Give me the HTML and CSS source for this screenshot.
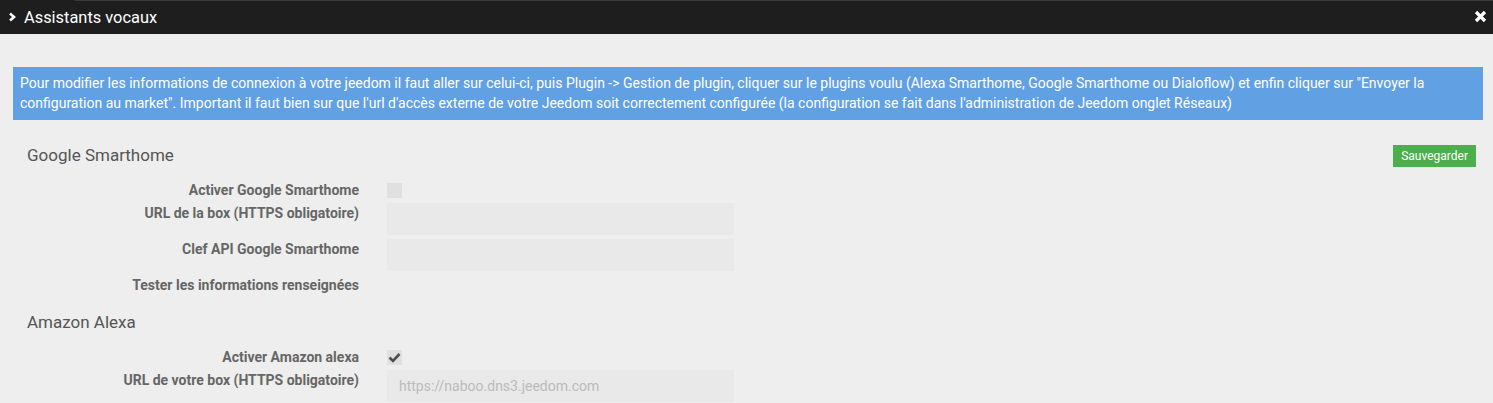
FILE: index.html
```html
<!DOCTYPE html>
<html lang="fr">
<head>
  <meta charset="UTF-8">
  <title>Assistants vocaux</title>
  <link rel="stylesheet" href="styles.css">
</head>
<body>
  <div class="titlebar">
    <svg class="chevron" width="9" height="10" viewBox="0 0 9 10"><path d="M2 1.5 L6 5 L2 8.5" fill="none" stroke="#fff" stroke-width="2.6"/></svg>
    <span class="title">Assistants vocaux</span>
    <svg class="close" width="13" height="13" viewBox="0 0 13 13"><path d="M2 2 L11 11 M11 2 L2 11" stroke="#fff" stroke-width="3.2"/></svg>
  </div>

  <div class="content">
    <div class="alert">Pour modifier les informations de connexion à votre jeedom il faut aller sur celui-ci, puis Plugin -&gt; Gestion de plugin, cliquer sur le plugins voulu (Alexa Smarthome, Google Smarthome ou Dialoflow) et enfin cliquer sur "Envoyer la configuration au market". Important il faut bien sur que l'url d'accès externe de votre Jeedom soit correctement configurée (la configuration se fait dans l'administration de Jeedom onglet Réseaux)</div>

    <div class="legend">
      <span>Google Smarthome</span>
      <button class="btn-save">Sauvegarder</button>
    </div>
    <div class="form">
      <label>Activer Google Smarthome</label>
      <div><span class="checkbox"></span></div>
      <label>URL de la box (HTTPS obligatoire)</label>
      <div><input class="field" type="text"></div>
      <label>Clef API Google Smarthome</label>
      <div><input class="field" type="text"></div>
      <label>Tester les informations renseignées</label>
      <div></div>
    </div>

    <div class="legend second">
      <span>Amazon Alexa</span>
    </div>
    <div class="form second">
      <label>Activer Amazon alexa</label>
      <div><span class="checkbox checked"><svg width="15" height="15" viewBox="0 0 15 15"><path d="M2.5 7.5 L6 11 L12.5 4" fill="none" stroke="#4e4e4e" stroke-width="2.6"/></svg></span></div>
      <label>URL de votre box (HTTPS obligatoire)</label>
      <div><input class="field" type="text" placeholder="https://naboo.dns3.jeedom.com"></div>
    </div>
  </div>
</body>
</html>
```

FILE: styles.css
```css
body {
  margin: 0;
  font-family: Roboto, 'Liberation Sans', sans-serif;
  background: #edeeed;
  overflow: hidden;
}

.titlebar {
  position: relative;
  height: 34px;
  background: #1e1e1e;
  display: flex;
  align-items: center;
  padding: 0 6px 0 8px;
  color: #fff;
}

.titlebar::before {
  content: '';
  position: absolute;
  top: 0;
  left: 75px;
  right: 0;
  height: 1px;
  background: #3a3a3a;
}

.chevron {
  margin-right: 7px;
  margin-top: -1px;
}

.title {
  font-size: 16.4px;
  flex: 1;
}

.close {
  margin-top: -1px;
}

.content {
  padding: 33px 10px 0 13px;
}

.alert {
  background: #62a0e4;
  color: #fff;
  font-size: 14px;
  line-height: 20px;
  padding: 6px 7px 7px 7px;
}

.legend {
  display: flex;
  justify-content: space-between;
  align-items: flex-start;
  margin-top: 25px;
  padding-left: 14px;
  font-size: 17px;
  line-height: 20px;
  color: #555;
}

.legend.second {
  margin-top: 18px;
}

.btn-save {
  height: 22px;
  margin-right: 7px;
  padding: 0 8px;
  border: none;
  background: #4cae4c;
  color: #fff;
  font-family: Roboto, 'Liberation Sans', sans-serif;
  font-size: 12px;
}

.form {
  display: grid;
  grid-template-columns: 346px 347px;
  column-gap: 28px;
  row-gap: 4px;
  margin-top: 13px;
}

.form.second {
  margin-top: 15px;
}

.form label {
  text-align: right;
  font-weight: bold;
  font-size: 14px;
  line-height: 18px;
  padding-top: 1px;
  color: #666;
}

.checkbox {
  display: block;
  width: 15px;
  height: 15px;
  margin-top: 3px;
  background: #e0e0e0;
}

.checkbox svg {
  display: block;
}

.field {
  display: block;
  box-sizing: border-box;
  width: 347px;
  height: 32px;
  border: none;
  background: #e8e9e8;
  padding: 0 12px;
  font-family: Roboto, 'Liberation Sans', sans-serif;
  font-size: 14px;
  outline: none;
}

.field::placeholder {
  color: #bbb;
}
```
